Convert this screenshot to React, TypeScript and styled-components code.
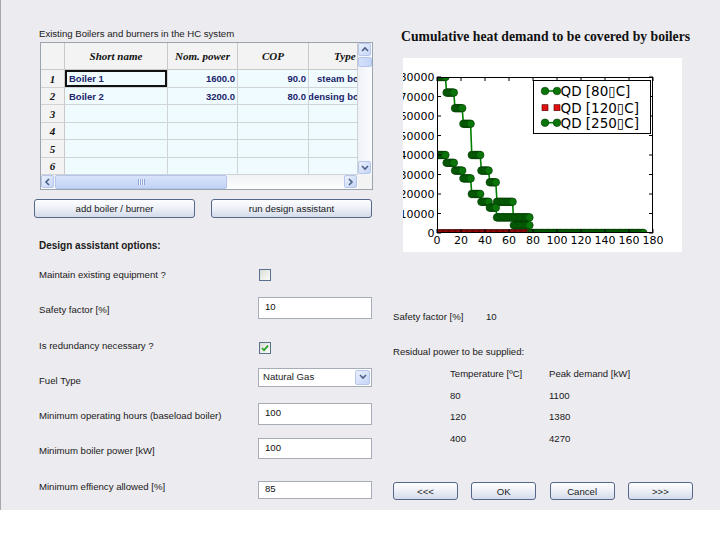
import React from "react";
import styled, { createGlobalStyle } from "styled-components";

const UI = `"Liberation Sans", Arial, sans-serif`;
const SERIF = `"Liberation Serif", "Times New Roman", serif`;
const PLOT = `"DejaVu Sans", sans-serif`;

const GlobalStyle = createGlobalStyle`
  html, body { margin: 0; padding: 0; background: #ffffff; }
  body { font-family: ${UI}; }
  * { box-sizing: border-box; }
`;

const shift = (dy: number) => (dy >= 0 ? `margin-top: ${2 * dy}px;` : `margin-bottom: ${-2 * dy}px;`);

const Window = styled.div`
  width: 720px;
  height: 510px;
  background: #ecebef;
  border-left: 1px solid #a9a9ad;
  display: grid;
  grid-template-columns: 339px 1fr;
  column-gap: 20px;
  padding-left: 33px;
  overflow: hidden;
  font-family: ${UI};
  font-size: 9.6px;
  color: #1a1a1a;
`;

const Column = styled.div`
  display: flex;
  flex-direction: column;
  min-height: 0;
`;

const RightColumn = styled(Column)`
  padding-bottom: 10px;
`;

const Caption = styled.div`
  margin-top: 28px;
  padding-left: 5px;
  line-height: 12px;
  height: 12px;
  white-space: nowrap;
`;

const TableFrame = styled.div`
  margin: 2px 0 0 6px;
  width: 333px;
  height: 148px;
  border: 1px solid #9aa3ae;
  background: #ffffff;
  display: grid;
  grid-template-columns: 317px 14px;
  grid-template-rows: 132px 14px;
`;

const Grid = styled.div`
  display: grid;
  grid-template-columns: 24px 103px 70px 71px 49px;
  grid-template-rows: 27px 18px 17px 18px 17px 18px 17px;
  overflow: hidden;
`;

const HeadCell = styled.div<{ $pad?: number }>`
  background: #f3f3f3;
  border-right: 1px solid #c9c9c9;
  border-bottom: 1px solid #c9c9c9;
  font-family: ${SERIF};
  font-style: italic;
  font-weight: bold;
  font-size: 11px;
  color: #111;
  display: flex;
  align-items: center;
  justify-content: ${(p) => (p.$pad !== undefined ? "flex-start" : "center")};
  padding-left: ${(p) => p.$pad ?? 0}px;
  white-space: nowrap;
  overflow: hidden;
`;

const RowHead = styled(HeadCell)`
  border-bottom-color: #d2d2d2;
`;

const DataCell = styled.div<{ $align?: "left" | "right" | "wide"; $focused?: boolean }>`
  background: #f0fbff;
  border-right: 1px solid #d0d4d6;
  border-bottom: 1px solid #d0d4d6;
  font-family: ${UI};
  font-weight: bold;
  font-size: 9.5px;
  color: #20246a;
  display: flex;
  align-items: center;
  justify-content: ${(p) => (p.$align === "right" ? "flex-end" : "flex-start")};
  padding: ${(p) => (p.$align === "right" ? "0 2px 0 0" : p.$align === "wide" ? "0" : "0 0 0 4px")};
  white-space: nowrap;
  overflow: hidden;
  box-shadow: ${(p) => (p.$focused ? "inset 0 0 0 2px #111" : "none")};
`;

const WideText = styled.span`
  width: 65px;
  min-width: 65px;
  max-width: 65px;
  flex: none;
  display: flex;
  justify-content: flex-end;
  padding-right: 1px;
  white-space: nowrap;
`;

const VScroll = styled.div`
  display: flex;
  flex-direction: column;
  background: linear-gradient(90deg, #eef1f8, #fbfcff);
  padding: 0 0 1px 0;
`;

const HScroll = styled.div`
  display: flex;
  align-items: stretch;
  background: linear-gradient(180deg, #f1f2f5, #fdfdfd);
  padding: 0 1px 0 0;
`;

const Corner = styled.div`
  background: #f3f3f3;
`;

const ScrollBtn = styled.div`
  width: 13px;
  height: 13px;
  flex: 0 0 13px;
  border: 1px solid #b7c7ec;
  border-radius: 2px;
  background: linear-gradient(135deg, #eaf0fd, #c5d5f7);
  display: flex;
  align-items: center;
  justify-content: center;
`;

const Thumb = styled.div<{ $vertical?: boolean }>`
  border: 1px solid #b4c5ec;
  border-radius: 2px;
  background: ${(p) =>
    p.$vertical ? "linear-gradient(90deg, #d4e0fa, #c4d4f6)" : "linear-gradient(180deg, #d9e4fb, #c3d3f6)"};
  display: flex;
  align-items: center;
  justify-content: center;
  ${(p) => (p.$vertical ? "height: 10px; margin: 1px 0;" : "width: 172px; margin: 0 0 0 1px;")}
`;

const Grip = styled.span`
  width: 7px;
  height: 6px;
  background: repeating-linear-gradient(90deg, #8fa6d6 0 1px, #eef3fd 1px 2px);
`;

const Spacer = styled.div`
  flex: 1;
`;

const Chevron = ({ dir }: { dir: "up" | "down" | "left" | "right" }) => {
  const pts: Record<string, string> = {
    up: "1,5 4,2 7,5",
    down: "1,2 4,5 7,2",
    left: "5,1 2,4 5,7",
    right: "2,1 5,4 2,7",
  };
  return (
    <svg width="8" height="8" viewBox="0 0 8 8">
      <polyline points={pts[dir]} fill="none" stroke="#4d6185" strokeWidth="1.6" />
    </svg>
  );
};

const ButtonRow = styled.div`
  display: flex;
  gap: 16px;
  margin-top: 9px;
`;

const XPButton = styled.button<{ $w: number }>`
  width: ${(p) => p.$w}px;
  height: 19px;
  padding: 0;
  border: 1px solid #56678a;
  border-radius: 3px;
  background: linear-gradient(180deg, #fdfeff 0%, #eef1f7 45%, #d3dbea 100%);
  font-family: ${UI};
  font-size: 9.6px;
  color: #1a1a1a;
`;

const NavButton = styled(XPButton)`
  height: 18px;
`;

const Heading = styled.div`
  margin-top: 22px;
  padding-left: 5px;
  font-weight: bold;
  font-size: 10px;
  line-height: 12px;
`;

const Form = styled.div`
  margin-top: 5.3px;
  display: grid;
  grid-auto-rows: 35.3px;
`;

const FormRow = styled.div`
  display: grid;
  grid-template-columns: 224px 114px;
  align-items: center;
`;

const Label = styled.div`
  padding-left: 5px;
  line-height: 12px;
  white-space: nowrap;
`;

const CheckBox = styled.span<{ $dy: number }>`
  width: 12px;
  height: 12px;
  margin-left: 1px;
  border: 1px solid #58718f;
  background: linear-gradient(135deg, #dcdcd6, #fbfbfa);
  display: flex;
  align-items: center;
  justify-content: center;
  ${(p) => shift(p.$dy)}
`;

const TextBox = styled.input<{ $h: number; $dy: number }>`
  width: 114px;
  height: ${(p) => p.$h}px;
  border: 1px solid #a6adb6;
  background: #ffffff;
  padding: 0 0 3px 6px;
  font-family: ${UI};
  font-size: 9.6px;
  color: #111;
  outline: none;
  ${(p) => shift(p.$dy)}
`;

const Combo = styled.div<{ $dy: number }>`
  width: 114px;
  height: 19px;
  border: 1px solid #a6adb6;
  background: #ffffff;
  display: flex;
  align-items: center;
  padding: 1px 1px 1px 4px;
  ${(p) => shift(p.$dy)}
`;

const ComboText = styled.span`
  flex: 1;
  line-height: 12px;
`;

const ComboBtn = styled(ScrollBtn)`
  width: 15px;
  height: 15px;
  flex: 0 0 15px;
`;

const ChartTitle = styled.div`
  margin-top: 29px;
  padding-left: 8px;
  font-family: ${SERIF};
  font-weight: bold;
  font-size: 13.7px;
  line-height: 16px;
  color: #111;
  white-space: nowrap;
`;

const ChartBox = styled.div`
  margin: 13px 0 0 10px;
  width: 279px;
  height: 194px;
  background: #ffffff;
  overflow: hidden;
`;

const InfoLine = styled.div`
  margin-top: 59px;
  display: flex;
  line-height: 12px;
`;

const InfoLabel = styled.span`
  width: 93px;
`;

const Residual = styled.div`
  margin-top: 23px;
  line-height: 12px;
`;

const DemandGrid = styled.div`
  margin-top: 5px;
  padding-left: 57px;
  display: grid;
  grid-template-columns: 99px auto;
  grid-auto-rows: 21.8px;
  align-items: center;
  line-height: 12px;
`;

const NavRow = styled.div`
  margin-top: auto;
  display: flex;
  gap: 13.3px;
`;

/* ---------------- chart ---------------- */

const X0 = 34;
const X1 = 250;
const Y0 = 19;
const Y1 = 175;
const sx = (x: number) => X0 + (x * (X1 - X0)) / 180;
const sy = (y: number) => Y1 - (y * (Y1 - Y0)) / 80000;

const steps = (def: [number, number][]) => {
  const out: [number, number][] = [];
  let x = 0;
  def.forEach(([until, v]) => {
    for (; x <= until; x++) out.push([x, v]);
  });
  return out;
};

const upper = steps([
  [7, 80000],
  [14, 72000],
  [21, 64000],
  [28, 56000],
  [36, 40000],
  [43, 32000],
  [49, 26000],
  [63, 16000],
  [77, 4000],
]);
const lower = steps([
  [7, 40000],
  [14, 36000],
  [21, 32000],
  [28, 28000],
  [36, 20000],
  [43, 16000],
  [49, 13000],
  [77, 8000],
  [172, 0],
]);
const red = steps([[77, 0]]);

const GREEN = "#008000";
const DOT_FILL = "#0a760a";
const DOT_EDGE = "#023302";

const GreenSeries = ({ pts }: { pts: [number, number][] }) => (
  <g>
    <polyline
      points={pts.map(([x, y]) => `${sx(x)},${sy(y)}`).join(" ")}
      fill="none"
      stroke={GREEN}
      strokeWidth="1.6"
    />
    {pts.map(([x, y]) => (
      <circle key={x} cx={sx(x)} cy={sy(y)} r="3.8" fill={DOT_FILL} stroke={DOT_EDGE} strokeWidth="0.6" />
    ))}
  </g>
);

const RedSeries = ({ pts }: { pts: [number, number][] }) => (
  <g>
    {pts.map(([x, y]) => (
      <rect key={x} x={sx(x) - 3} y={sy(y) - 3} width="6" height="6" fill="#c81010" stroke="#4a0000" strokeWidth="0.6" />
    ))}
  </g>
);

const Chart = () => {
  const xt = [0, 20, 40, 60, 80, 100, 120, 140, 160, 180];
  const yt = [0, 10000, 20000, 30000, 40000, 50000, 60000, 70000, 80000];
  const legend = [
    { label: "QD [80\u25AFC]", kind: "g", cy: 33 },
    { label: "QD [120\u25AFC]", kind: "r", cy: 49.7 },
    { label: "QD [250\u25AFC]", kind: "g", cy: 64.7 },
  ];
  return (
    <svg width="279" height="194" viewBox="0 0 279 194">
      <defs>
        <clipPath id="plotClip">
          <rect x={X0} y={Y0} width={X1 - X0} height={Y1 - Y0} />
        </clipPath>
      </defs>
      <g clipPath="url(#plotClip)">
        <GreenSeries pts={upper} />
        <RedSeries pts={red} />
        <GreenSeries pts={lower} />
      </g>
      <rect x={X0 + 0.5} y={Y0 + 0.5} width={X1 - X0 - 1} height={Y1 - Y0 - 1} fill="none" stroke="#000" strokeWidth="1" />
      {xt.map((t) => (
        <g key={t}>
          <line x1={sx(t)} y1={Y1} x2={sx(t)} y2={Y1 - 4} stroke="#000" strokeWidth="1" />
          <line x1={sx(t)} y1={Y0} x2={sx(t)} y2={Y0 + 4} stroke="#000" strokeWidth="1" />
          <text x={sx(t)} y={186} fontFamily={PLOT} fontSize="11" textAnchor="middle" fill="#000">
            {t}
          </text>
        </g>
      ))}
      {yt.map((t) => (
        <g key={t}>
          <line x1={X0} y1={sy(t)} x2={X0 + 4} y2={sy(t)} stroke="#000" strokeWidth="1" />
          <line x1={X1} y1={sy(t)} x2={X1 - 4} y2={sy(t)} stroke="#000" strokeWidth="1" />
          <text x={31.5} y={sy(t) + 4} fontFamily={PLOT} fontSize="11" textAnchor="end" fill="#000">
            {t}
          </text>
        </g>
      ))}
      <rect x="130.5" y="22.5" width="117" height="53" fill="#fff" stroke="#000" strokeWidth="1" />
      {legend.map((l) => (
        <g key={l.label}>
          {l.kind === "g" ? (
            <>
              <line x1="142" y1={l.cy} x2="154" y2={l.cy} stroke={GREEN} strokeWidth="1.6" />
              <circle cx="142" cy={l.cy} r="3.8" fill={DOT_FILL} stroke={DOT_EDGE} strokeWidth="0.6" />
              <circle cx="154" cy={l.cy} r="3.8" fill={DOT_FILL} stroke={DOT_EDGE} strokeWidth="0.6" />
            </>
          ) : (
            <>
              <rect x="139" y={l.cy - 3} width="6" height="6" fill="#e01010" stroke="#4a0000" strokeWidth="0.6" />
              <rect x="151" y={l.cy - 3} width="6" height="6" fill="#e01010" stroke="#4a0000" strokeWidth="0.6" />
            </>
          )}
          <text x="157.5" y={l.cy + 5} fontFamily={PLOT} fontSize="13.5" fill="#000">
            {l.label}
          </text>
        </g>
      ))}
    </svg>
  );
};

/* ---------------- data ---------------- */

const boilers = [
  { name: "Boiler 1", power: "1600.0", cop: "90.0", type: "steam boiler" },
  { name: "Boiler 2", power: "3200.0", cop: "80.0", type: "condensing boiler" },
];

const demands = [
  ["80", "1100"],
  ["120", "1380"],
  ["400", "4270"],
];

const CheckMark = () => (
  <svg width="8" height="8" viewBox="0 0 8 8">
    <polyline points="1,4 3,6.2 7,1.6" fill="none" stroke="#21a121" strokeWidth="1.7" />
  </svg>
);

export default function App() {
  const rows = [1, 2, 3, 4, 5, 6];
  return (
    <>
      <GlobalStyle />
      <Window>
        <Column>
          <Caption>Existing Boilers and burners in the HC system</Caption>
          <TableFrame>
            <Grid>
              <HeadCell />
              <HeadCell>Short name</HeadCell>
              <HeadCell>Nom. power</HeadCell>
              <HeadCell>COP</HeadCell>
              <HeadCell $pad={25}>Type</HeadCell>
              {rows.map((r) => {
                const b = boilers[r - 1];
                return (
                  <React.Fragment key={r}>
                    <RowHead>{r}</RowHead>
                    <DataCell $focused={r === 1}>{b ? b.name : ""}</DataCell>
                    <DataCell $align="right">{b ? b.power : ""}</DataCell>
                    <DataCell $align="right">{b ? b.cop : ""}</DataCell>
                    <DataCell $align="wide">{b ? <WideText>{b.type}</WideText> : null}</DataCell>
                  </React.Fragment>
                );
              })}
            </Grid>
            <VScroll>
              <ScrollBtn>
                <Chevron dir="up" />
              </ScrollBtn>
              <Thumb $vertical />
              <Spacer />
              <ScrollBtn>
                <Chevron dir="down" />
              </ScrollBtn>
            </VScroll>
            <HScroll>
              <ScrollBtn>
                <Chevron dir="left" />
              </ScrollBtn>
              <Thumb>
                <Grip />
              </Thumb>
              <Spacer />
              <ScrollBtn>
                <Chevron dir="right" />
              </ScrollBtn>
            </HScroll>
            <Corner />
          </TableFrame>
          <ButtonRow>
            <XPButton $w={161}>add boiler / burner</XPButton>
            <XPButton $w={161}>run design assistant</XPButton>
          </ButtonRow>
          <Heading>Design assistant options:</Heading>
          <Form>
            <FormRow>
              <Label>Maintain existing equipment ?</Label>
              <CheckBox $dy={0} />
            </FormRow>
            <FormRow>
              <Label>Safety factor [%]</Label>
              <TextBox $h={22} $dy={-2} readOnly value="10" />
            </FormRow>
            <FormRow>
              <Label>Is redundancy necessary ?</Label>
              <CheckBox $dy={2}>
                <CheckMark />
              </CheckBox>
            </FormRow>
            <FormRow>
              <Label>Fuel Type</Label>
              <Combo $dy={-3.5}>
                <ComboText>Natural Gas</ComboText>
                <ComboBtn>
                  <Chevron dir="down" />
                </ComboBtn>
              </Combo>
            </FormRow>
            <FormRow>
              <Label>Minimum operating hours (baseload boiler)</Label>
              <TextBox $h={22} $dy={-2} readOnly value="100" />
            </FormRow>
            <FormRow>
              <Label>Minimum boiler power [kW]</Label>
              <TextBox $h={21} $dy={-2.5} readOnly value="100" />
            </FormRow>
            <FormRow>
              <Label>Minimum effiency allowed [%]</Label>
              <TextBox $h={18} $dy={3} readOnly value="85" />
            </FormRow>
          </Form>
        </Column>
        <RightColumn>
          <ChartTitle>Cumulative heat demand to be covered by boilers</ChartTitle>
          <ChartBox>
            <Chart />
          </ChartBox>
          <InfoLine>
            <InfoLabel>Safety factor [%]</InfoLabel>
            <span>10</span>
          </InfoLine>
          <Residual>Residual power to be supplied:</Residual>
          <DemandGrid>
            <span>Temperature [ºC]</span>
            <span>Peak demand [kW]</span>
            {demands.map(([t, p]) => (
              <React.Fragment key={t}>
                <span>{t}</span>
                <span>{p}</span>
              </React.Fragment>
            ))}
          </DemandGrid>
          <NavRow>
            <NavButton $w={65}>&lt;&lt;&lt;</NavButton>
            <NavButton $w={65}>OK</NavButton>
            <NavButton $w={65}>Cancel</NavButton>
            <NavButton $w={65}>&gt;&gt;&gt;</NavButton>
          </NavRow>
        </RightColumn>
      </Window>
    </>
  );
}
